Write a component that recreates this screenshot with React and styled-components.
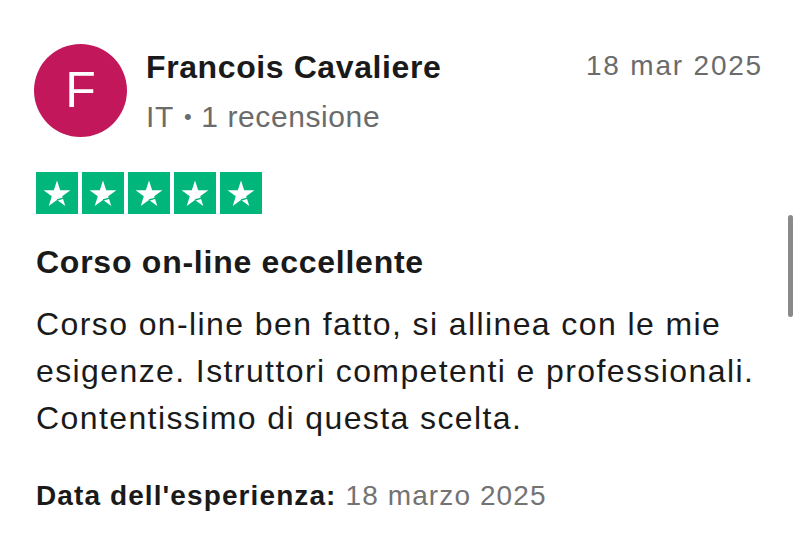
import styled, { createGlobalStyle } from "styled-components";

const GlobalStyle = createGlobalStyle`
  html, body {
    margin: 0;
    padding: 0;
    background: #ffffff;
  }
  body {
    font-family: "Liberation Sans", Arial, Helvetica, sans-serif;
    color: #1a1a1a;
  }
`;

const Page = styled.main`
  position: relative;
  width: 800px;
  height: 533px;
  overflow: hidden;
  box-sizing: border-box;
  padding: 44px 37px 0 34px;
`;

const Header = styled.header`
  display: flex;
  align-items: flex-start;
`;

const Avatar = styled.div`
  width: 93px;
  height: 93px;
  flex-shrink: 0;
  border-radius: 50%;
  background-color: #c2185b;
  color: #ffffff;
  display: flex;
  justify-content: center;
  align-items: center;
  font-size: 50px;
  line-height: 1;
  padding-bottom: 2px;
  box-sizing: border-box;
`;

const Info = styled.div`
  flex: 1;
  margin-left: 19px;
  display: flex;
  flex-direction: column;
`;

const Name = styled.h2`
  margin: 4px 0 0;
  font-size: 32px;
  line-height: 38px;
  font-weight: 700;
  letter-spacing: 0.6px;
  color: #1a1a1a;
`;

const Meta = styled.div`
  margin-top: 13px;
  font-size: 30px;
  line-height: 36px;
  color: #6b6b6b;
  letter-spacing: 0.6px;
  span {
    font-size: 22px;
    vertical-align: 3px;
    margin: 0 9px 0 10px;
  }
`;

const DateText = styled.div`
  margin-top: 5px;
  font-size: 28px;
  line-height: 34px;
  color: #6b6b6b;
  letter-spacing: 1.8px;
  white-space: nowrap;
`;

const Stars = styled.div`
  display: flex;
  gap: 4px;
  margin-top: 35px;
  margin-left: 2px;
`;

const StarBox = styled.div`
  width: 42px;
  height: 42px;
  background-color: ${(p) => (p.$on ? "#00b67a" : "#dcdce6")};
  display: flex;
  justify-content: center;
  align-items: center;
`;

const Title = styled.h3`
  margin: 29px 0 0 2px;
  font-size: 32px;
  line-height: 38px;
  font-weight: 700;
  letter-spacing: 0.75px;
  color: #1a1a1a;
`;

const Body = styled.p`
  margin: 20px 0 0 2px;
  font-size: 32px;
  line-height: 47px;
  letter-spacing: 1.4px;
  color: #1a1a1a;
`;

const Experience = styled.p`
  margin: 37px 0 0 2px;
  font-size: 28px;
  line-height: 33px;
  letter-spacing: 1.1px;
  color: #737373;
  b {
    color: #1a1a1a;
    font-weight: 700;
    margin-right: 9px;
  }
`;

const Scrollbar = styled.div`
  position: absolute;
  right: 7px;
  top: 215px;
  width: 5px;
  height: 102px;
  border-radius: 3px;
  background-color: #8a8a8a;
`;

const Star = () => (
  <svg width="42" height="42" viewBox="0 0 42 42">
    <polygon
      points="21,8.5 24.2,18.2 34.4,18.2 26.2,24.2 29.3,34 21,28 12.7,34 15.8,24.2 7.6,18.2 17.8,18.2"
      fill="#ffffff"
    />
    <line x1="21" y1="28" x2="27.6" y2="26.1" stroke="#00b67a" strokeWidth="1.4" />
  </svg>
);

const App = () => {
  const rating = 5;
  return (
    <Page>
      <GlobalStyle />
      <Header>
        <Avatar>F</Avatar>
        <Info>
          <Name>Francois Cavaliere</Name>
          <Meta>
            IT<span>•</span>1 recensione
          </Meta>
        </Info>
        <DateText>18 mar 2025</DateText>
      </Header>
      <Stars>
        {[1, 2, 3, 4, 5].map((n) => (
          <StarBox key={n} $on={n <= rating}>
            <Star />
          </StarBox>
        ))}
      </Stars>
      <Title>Corso on-line eccellente</Title>
      <Body>
        Corso on-line ben fatto, si allinea con le mie esigenze. Istruttori
        competenti e professionali. Contentissimo di questa scelta.
      </Body>
      <Experience>
        <b>Data dell'esperienza:</b>18 marzo 2025
      </Experience>
      <Scrollbar />
    </Page>
  );
};

export default App;
